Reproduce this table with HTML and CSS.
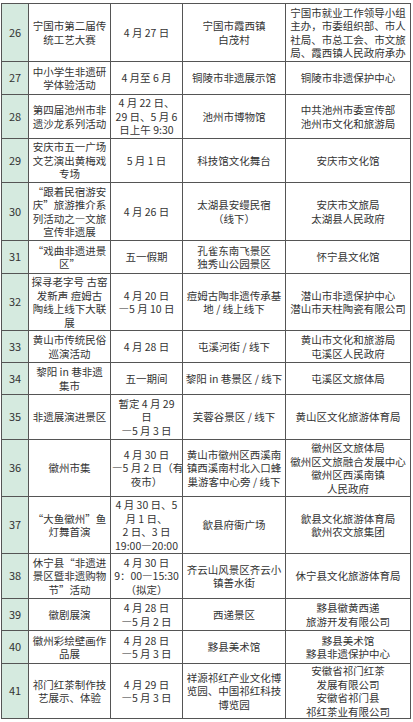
FILE: index.html
```html
<!DOCTYPE html>
<html lang="zh">
<head>
<meta charset="utf-8">
<link rel="stylesheet" href="styles.css">
</head>
<body>
<table class="sched">
<colgroup>
<col class="c-no"><col class="c-name"><col class="c-date"><col class="c-place"><col class="c-org">
</colgroup>
<tbody>
<tr><td class="no">26</td><td>宁国市第二届传<br>统工艺大赛</td><td>4 月 27 日</td><td>宁国市霞西镇<br>白茂村</td><td>宁国市就业工作领导小组<br>主办，市委组织部、市人<br>社局、市总工会、市文旅<br>局、霞西镇人民政府承办</td></tr>
<tr><td class="no">27</td><td>中小学生非遗研<br>学体验活动</td><td>4 月至 6 月</td><td>铜陵市非遗展示馆</td><td>铜陵市非遗保护中心</td></tr>
<tr><td class="no">28</td><td>第四届池州市非<br>遗沙龙系列活动</td><td>4 月 22 日、<br>29 日、5 月 6<br>日上午 9:30</td><td>池州市博物馆</td><td>中共池州市委宣传部<br>池州市文化和旅游局</td></tr>
<tr><td class="no">29</td><td>安庆市五一广场<br>文艺演出黄梅戏<br>专场</td><td>5 月 1 日</td><td>科技馆文化舞台</td><td>安庆市文化馆</td></tr>
<tr><td class="no">30</td><td>“跟着民宿游安<br>庆”旅游推介系<br>列活动之—文旅<br>宣传非遗展</td><td>4 月 26 日</td><td>太湖县安缦民宿<br>（线下）</td><td>安庆市文旅局<br>太湖县人民政府</td></tr>
<tr><td class="no">31</td><td>“戏曲非遗进景<br>区”</td><td>五一假期</td><td>孔雀东南飞景区<br>独秀山公园景区</td><td>怀宁县文化馆</td></tr>
<tr><td class="no">32</td><td>探寻老字号 古窑<br>发新声 痘姆古<br>陶线上线下大联<br>展</td><td>4 月 20 日<br>—5 月 10 日</td><td>痘姆古陶非遗传承基<br>地 / 线上线下</td><td>潜山市非遗保护中心<br>潜山市天柱陶瓷有限公司</td></tr>
<tr><td class="no">33</td><td>黄山市传统民俗<br>巡演活动</td><td>4 月 28 日</td><td>屯溪河街 / 线下</td><td>黄山市文化和旅游局<br>屯溪区人民政府</td></tr>
<tr><td class="no">34</td><td>黎阳 in 巷非遗<br>集市</td><td>五一期间</td><td>黎阳 in 巷景区 / 线下</td><td>屯溪区文旅体局</td></tr>
<tr><td class="no">35</td><td>非遗展演进景区</td><td>暂定 4 月 29<br>日<br>—5 月 3 日</td><td>芙蓉谷景区 / 线下</td><td>黄山区文化旅游体育局</td></tr>
<tr><td class="no">36</td><td>徽州市集</td><td>4 月 30 日<br>—5 月 2 日（有<br>夜市）</td><td>黄山市徽州区西溪南<br>镇西溪南村北入口蜂<br>巢游客中心旁 / 线下</td><td>徽州区文旅体局<br>徽州区文旅融合发展中心<br>徽州区西溪南镇<br>人民政府</td></tr>
<tr><td class="no">37</td><td>“大鱼徽州”鱼<br>灯舞首演</td><td>4 月 30 日、5<br>月 1 日、<br>2 日、3 日<br>19:00—20:00</td><td>歙县府衙广场</td><td>歙县文化旅游体育局<br>歙州农文旅集团</td></tr>
<tr><td class="no">38</td><td>休宁县“非遗进<br>景区暨非遗购物<br>节”活动</td><td>4 月 30 日<br>9：00—15:30<br>（拟定）</td><td>齐云山风景区齐云小<br>镇善水街</td><td>休宁县文化旅游体育局</td></tr>
<tr><td class="no">39</td><td>徽剧展演</td><td>4 月 28 日<br>—5 月 2 日</td><td>西递景区</td><td>黟县徽黄西递<br>旅游开发有限公司</td></tr>
<tr><td class="no">40</td><td>徽州彩绘壁画作<br>品展</td><td>4 月 28 日<br>—5 月 3 日</td><td>黟县美术馆</td><td>黟县美术馆<br>黟县非遗保护中心</td></tr>
<tr><td class="no">41</td><td>祁门红茶制作技<br>艺展示、体验</td><td>4 月 29 日<br>—5 月 3 日</td><td>祥源祁红产业文化博<br>览园、中国祁红科技<br>博览园</td><td>安徽省祁门红茶<br>发展有限公司<br>安徽省祁门县<br>祁红茶业有限公司</td></tr>
</tbody>
</table>
</body>
</html>
```
FILE: styles.css
```css
html, body {
  margin: 0;
  padding: 0;
  background: #ffffff;
}
body {
  font-family: "Noto Sans CJK SC", "Noto Sans", sans-serif;
  color: #333333;
}
.sched {
  margin: 3px 0 0 1px;
  width: 409px;
  table-layout: fixed;
  border-collapse: collapse;
  font-size: 10.5px;
  line-height: 13.5px;
}
.c-no { width: 27px; }
.c-name { width: 82px; }
.c-date { width: 72px; }
.c-place { width: 103px; }
.c-org { width: 125px; }
.sched td {
  border: 1px solid #555555;
  padding: 0 1px;
  text-align: center;
  vertical-align: middle;
  white-space: nowrap;
  overflow: hidden;
}
.sched td.no {
  background: #d5eadf;
  font-size: 11px;
}
.sched tr:nth-child(1) { height: 58px; }
.sched tr:nth-child(2) { height: 33px; }
.sched tr:nth-child(3) { height: 44px; }
.sched tr:nth-child(4) { height: 44px; }
.sched tr:nth-child(5) { height: 58px; }
.sched tr:nth-child(6) { height: 33px; }
.sched tr:nth-child(7) { height: 57px; }
.sched tr:nth-child(8) { height: 32px; }
.sched tr:nth-child(9) { height: 32px; }
.sched tr:nth-child(10) { height: 45px; }
.sched tr:nth-child(11) { height: 57px; }
.sched tr:nth-child(12) { height: 57px; }
.sched tr:nth-child(13) { height: 45px; }
.sched tr:nth-child(14) { height: 32px; }
.sched tr:nth-child(15) { height: 33px; }
.sched tr:nth-child(16) { height: 54px; }
```
